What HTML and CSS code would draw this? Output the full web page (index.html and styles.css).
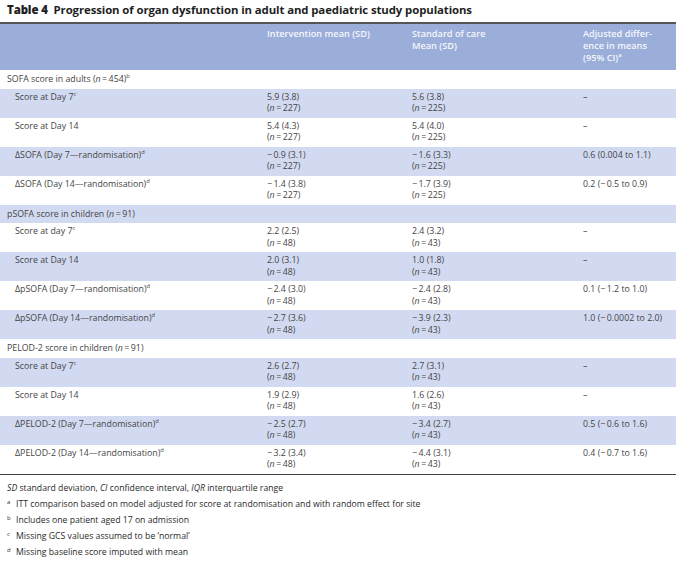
FILE: index.html
```html
<!DOCTYPE html>
<html>
<head>
<meta charset="utf-8">
<link rel="stylesheet" href="styles.css">
</head>
<body>
<div class="title"><b>Table 4</b>&nbsp; Progression of organ dysfunction in adult and paediatric study populations</div>
<table class="tbl">
  <thead>
    <tr>
      <th class="c1"></th>
      <th class="c2">Intervention mean (SD)</th>
      <th class="c3">Standard of care<br>Mean (SD)</th>
      <th class="c4">Adjusted differ-<br>ence in means<br>(95% CI)<sup>a</sup></th>
    </tr>
  </thead>
  <tbody>
    <tr class="sec"><td colspan="4">SOFA score in adults (<i>n</i>&#8201;=&#8201;454)<sup>b</sup></td></tr>
    <tr><td class="lab">Score at Day 7<sup>c</sup></td><td>5.9 (3.8)<br>(<i>n</i>&#8201;=&#8201;227)</td><td>5.6 (3.8)<br>(<i>n</i>&#8201;=&#8201;225)</td><td>–</td></tr>
    <tr><td class="lab">Score at Day 14</td><td>5.4 (4.3)<br>(<i>n</i>&#8201;=&#8201;227)</td><td>5.4 (4.0)<br>(<i>n</i>&#8201;=&#8201;225)</td><td>–</td></tr>
    <tr><td class="lab">ΔSOFA (Day 7—randomisation)<sup>d</sup></td><td>−&#8201;0.9 (3.1)<br>(<i>n</i>&#8201;=&#8201;227)</td><td>−&#8201;1.6 (3.3)<br>(<i>n</i>&#8201;=&#8201;225)</td><td>0.6 (0.004 to 1.1)</td></tr>
    <tr><td class="lab">ΔSOFA (Day 14—randomisation)<sup>d</sup></td><td>−&#8201;1.4 (3.8)<br>(<i>n</i>&#8201;=&#8201;227)</td><td>−&#8201;1.7 (3.9)<br>(<i>n</i>&#8201;=&#8201;225)</td><td>0.2 (−&#8201;0.5 to 0.9)</td></tr>
    <tr class="sec"><td colspan="4">pSOFA score in children (<i>n</i>&#8201;=&#8201;91)</td></tr>
    <tr><td class="lab">Score at day 7<sup>c</sup></td><td>2.2 (2.5)<br>(<i>n</i>&#8201;=&#8201;48)</td><td>2.4 (3.2)<br>(<i>n</i>&#8201;=&#8201;43)</td><td>–</td></tr>
    <tr><td class="lab">Score at Day 14</td><td>2.0 (3.1)<br>(<i>n</i>&#8201;=&#8201;48)</td><td>1.0 (1.8)<br>(<i>n</i>&#8201;=&#8201;43)</td><td>–</td></tr>
    <tr><td class="lab">ΔpSOFA (Day 7—randomisation)<sup>d</sup></td><td>−&#8201;2.4 (3.0)<br>(<i>n</i>&#8201;=&#8201;48)</td><td>−&#8201;2.4 (2.8)<br>(<i>n</i>&#8201;=&#8201;43)</td><td>0.1 (−&#8201;1.2 to 1.0)</td></tr>
    <tr><td class="lab">ΔpSOFA (Day 14—randomisation)<sup>d</sup></td><td>−&#8201;2.7 (3.6)<br>(<i>n</i>&#8201;=&#8201;48)</td><td>−&#8201;3.9 (2.3)<br>(<i>n</i>&#8201;=&#8201;43)</td><td>1.0 (−&#8201;0.0002 to 2.0)</td></tr>
    <tr class="sec"><td colspan="4">PELOD-2 score in children (<i>n</i>&#8201;=&#8201;91)</td></tr>
    <tr><td class="lab">Score at Day 7<sup>c</sup></td><td>2.6 (2.7)<br>(<i>n</i>&#8201;=&#8201;48)</td><td>2.7 (3.1)<br>(<i>n</i>&#8201;=&#8201;43)</td><td>–</td></tr>
    <tr><td class="lab">Score at Day 14</td><td>1.9 (2.9)<br>(<i>n</i>&#8201;=&#8201;48)</td><td>1.6 (2.6)<br>(<i>n</i>&#8201;=&#8201;43)</td><td>–</td></tr>
    <tr><td class="lab">ΔPELOD-2 (Day 7—randomisation)<sup>d</sup></td><td>−&#8201;2.5 (2.7)<br>(<i>n</i>&#8201;=&#8201;48)</td><td>−&#8201;3.4 (2.7)<br>(<i>n</i>&#8201;=&#8201;43)</td><td>0.5 (−&#8201;0.6 to 1.6)</td></tr>
    <tr><td class="lab">ΔPELOD-2 (Day 14—randomisation)<sup>d</sup></td><td>−&#8201;3.2 (3.4)<br>(<i>n</i>&#8201;=&#8201;48)</td><td>−&#8201;4.4 (3.1)<br>(<i>n</i>&#8201;=&#8201;43)</td><td>0.4 (−&#8201;0.7 to 1.6)</td></tr>
  </tbody>
</table>
<div class="notes">
  <p><i>SD</i> standard deviation, <i>CI</i> confidence interval, <i>IQR</i> interquartile range</p>
  <p><sup class="fm">a</sup>ITT comparison based on model adjusted for score at randomisation and with random effect for site</p>
  <p><sup class="fm">b</sup>Includes one patient aged 17 on admission</p>
  <p><sup class="fm">c</sup>Missing GCS values assumed to be ‘normal’</p>
  <p><sup class="fm">d</sup>Missing baseline score imputed with mean</p>
</div>
</body>
</html>
```
FILE: styles.css
```css
html, body {
  margin: 0;
  padding: 0;
  background: #ffffff;
}
body {
  font-family: "Open Sans", "Noto Sans", sans-serif;
  color: #3a3a3a;
}
.title {
  padding: 3px 0 0 7px;
  height: 19px;
  box-sizing: border-box;
  font-size: 11.4px;
  line-height: 14px;
  font-weight: 700;
  color: #1f1f1f;
  letter-spacing: -0.1px;
  white-space: nowrap;
}
.tbl {
  width: 676px;
  border-collapse: collapse;
  border-top: 2px solid #555555;
  border-bottom: 1px solid #444444;
  font-size: 8.8px;
  line-height: 11.5px;
  margin-top: 3px;
}
.tbl sup {
  font-size: 5.8px;
  line-height: 0;
  vertical-align: 4px;
}
.tbl th {
  background: #9baed9;
  color: #f4f6fc;
  font-weight: 600;
  font-size: 9.2px;
  line-height: 12px;
  text-align: left;
  vertical-align: top;
  padding: 4px 4px 0 0;
  height: 42px;
}
.tbl th.c1 { width: 263px; padding-left: 0; }
.tbl th.c2 { width: 141px; }
.tbl th.c3 { width: 167px; }
.tbl td {
  vertical-align: top;
  padding: 3px 4px 2px 0;
  height: 24px;
  color: #454545;
}
.tbl td.lab {
  padding-left: 15px;
}
.tbl tr.sec td {
  padding: 4px 0 3px 7px;
  height: auto;
}
.tbl tbody tr:nth-child(even) td {
  background: #d2daf1;
}
.tbl i { font-style: italic; }
.notes {
  padding: 5px 0 0 7px;
  font-size: 8.7px;
  color: #2a2a2a;
}
.notes p {
  margin: 0;
  height: 16px;
  line-height: 16px;
  white-space: nowrap;
}
.notes .fm {
  display: inline-block;
  width: 9px;
  font-size: 6px;
  line-height: 0;
  vertical-align: 3px;
}
```
